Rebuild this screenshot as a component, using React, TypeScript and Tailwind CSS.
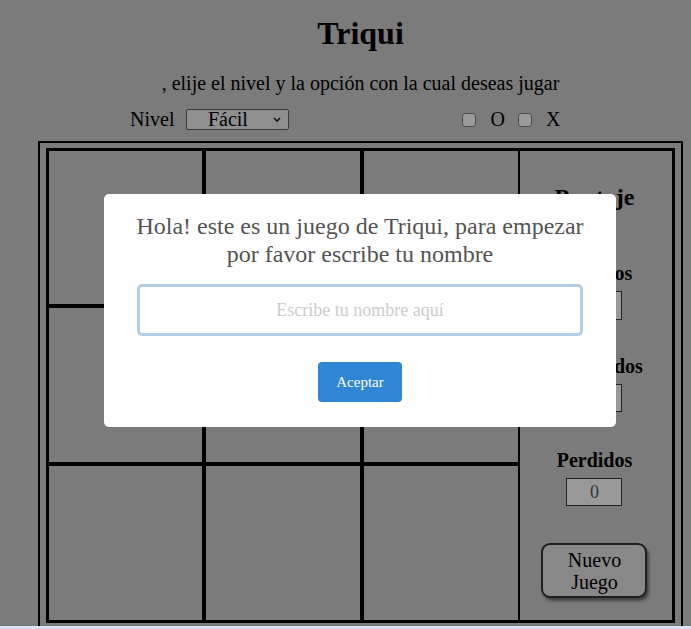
import { useState } from "react";

const SCORES = [
  { label: "Ganados", gap: "mt-[51px]", box: "h-[29px]" },
  { label: "Empatados", gap: "mt-[35px]", box: "h-[28px]" },
  { label: "Perdidos", gap: "mt-[37px]", box: "h-[28px]" },
];

function Checkbox() {
  return <span className="inline-block h-[14px] w-[14px] rounded-[3px] border border-[#4d4d4d] bg-[#9a9a9a]" />;
}

function ScorePanel() {
  return (
    <div className="flex w-[153px] flex-col items-center pr-[3px]">
      <h2 className="mt-[32px] text-[24px] font-bold leading-[28px] text-black">Puntaje</h2>
      {SCORES.map((s) => (
        <div key={s.label} className="flex flex-col items-center">
          <span className={`${s.gap} text-[20px] font-bold leading-[23px] text-black`}>{s.label}</span>
          <div
            className={`mt-[6px] flex w-[56px] items-center justify-center border border-[#222] bg-[#999] text-[18px] text-[#333] ${s.box}`}
          >
            0
          </div>
        </div>
      ))}
      <button className="mt-[37px] flex h-[55px] w-[106px] flex-col items-center justify-center rounded-[9px] border-2 border-[#1f1f1f] bg-[#888] font-['Liberation_Serif',serif] text-[20px] leading-[22px] text-black shadow-[2px_3px_3px_rgba(0,0,0,0.45)]">
        <span>Nuevo</span>
        <span>Juego</span>
      </button>
    </div>
  );
}

export default function App() {
  const [name, setName] = useState("");

  return (
    <div className="relative h-[629px] w-full overflow-hidden bg-[#7b7b7b] font-['Liberation_Serif',serif]">
      <div className="ml-[38px] flex w-[645px] flex-col items-center">
        <h1 className="mt-[15px] text-[32px] font-bold leading-[37px] text-black">Triqui</h1>
        <p className="mt-[20px] text-[20px] leading-[23px] text-black">
          , elije el nivel y la opción con la cual deseas jugar
        </p>

        <div className="mt-[13px] flex h-[23px] items-center self-stretch pl-[92px] text-[20px] leading-[23px] text-black">
          <span>Nivel</span>
          <span className="relative ml-[12px] inline-flex h-[21px] w-[103px]">
            <select className="h-full w-full appearance-none rounded-[2px] border border-[#3a3a3a] bg-[#8f8f8f] pr-[20px] font-['Liberation_Serif',serif] text-[20px] leading-[19px] text-black [text-align-last:center]">
              <option>Fácil</option>
              <option>Medio</option>
              <option>Difícil</option>
            </select>
            <svg
              className="pointer-events-none absolute right-[8px] top-[8px]"
              width="8"
              height="5"
              viewBox="0 0 8 5"
            >
              <path d="M1 1l3 3 3-3" fill="none" stroke="#111" strokeWidth="1.6" />
            </svg>
          </span>
          <span className="ml-[173px] flex items-center">
            <Checkbox />
          </span>
          <span className="ml-[14px]">O</span>
          <span className="ml-[13px] flex items-center">
            <Checkbox />
          </span>
          <span className="ml-[14px]">X</span>
        </div>

        <div className="mt-[10px] w-full border-2 border-black px-[6px] pt-[5px] pb-[5px]">
          <div className="flex border-[3px] border-black">
            <div className="grid grid-cols-[153px_154px_154px] grid-rows-[153px_154px_154px] gap-[4px] bg-black">
              {Array.from({ length: 9 }).map((_, i) => (
                <div key={i} className="bg-[#7b7b7b]" />
              ))}
            </div>
            <div className="w-[2px] bg-black" />
            <ScorePanel />
          </div>
        </div>
      </div>

      {/* sweet alert style prompt */}
      <div className="absolute left-[104px] top-[194px] flex h-[233px] w-[512px] flex-col items-center rounded-[5px] bg-white px-[20px] pt-[18px]">
        <h2 className="text-center text-[24px] leading-[28px] text-[#545454]">
          Hola! este es un juego de Triqui, para empezar por favor escribe tu nombre
        </h2>
        <input
          value={name}
          onChange={(e) => setName(e.target.value)}
          placeholder="Escribe tu nombre aquí"
          className="mt-[16px] h-[52px] w-[446px] shrink-0 rounded-[5px] border-[3px] border-[#b3cde6] bg-white text-center font-['Liberation_Serif',serif] text-[18px] text-[#545454] outline-none placeholder:text-[#cccccc]"
        />
        <button className="mt-[26px] h-[40px] w-[84px] rounded-[4px] bg-[#3085d6] font-['Liberation_Serif',serif] text-[15px] text-white">
          Aceptar
        </button>
      </div>

      <div className="absolute bottom-0 left-0 right-0 h-[3px] bg-[#dbe4ee]" />
    </div>
  );
}
